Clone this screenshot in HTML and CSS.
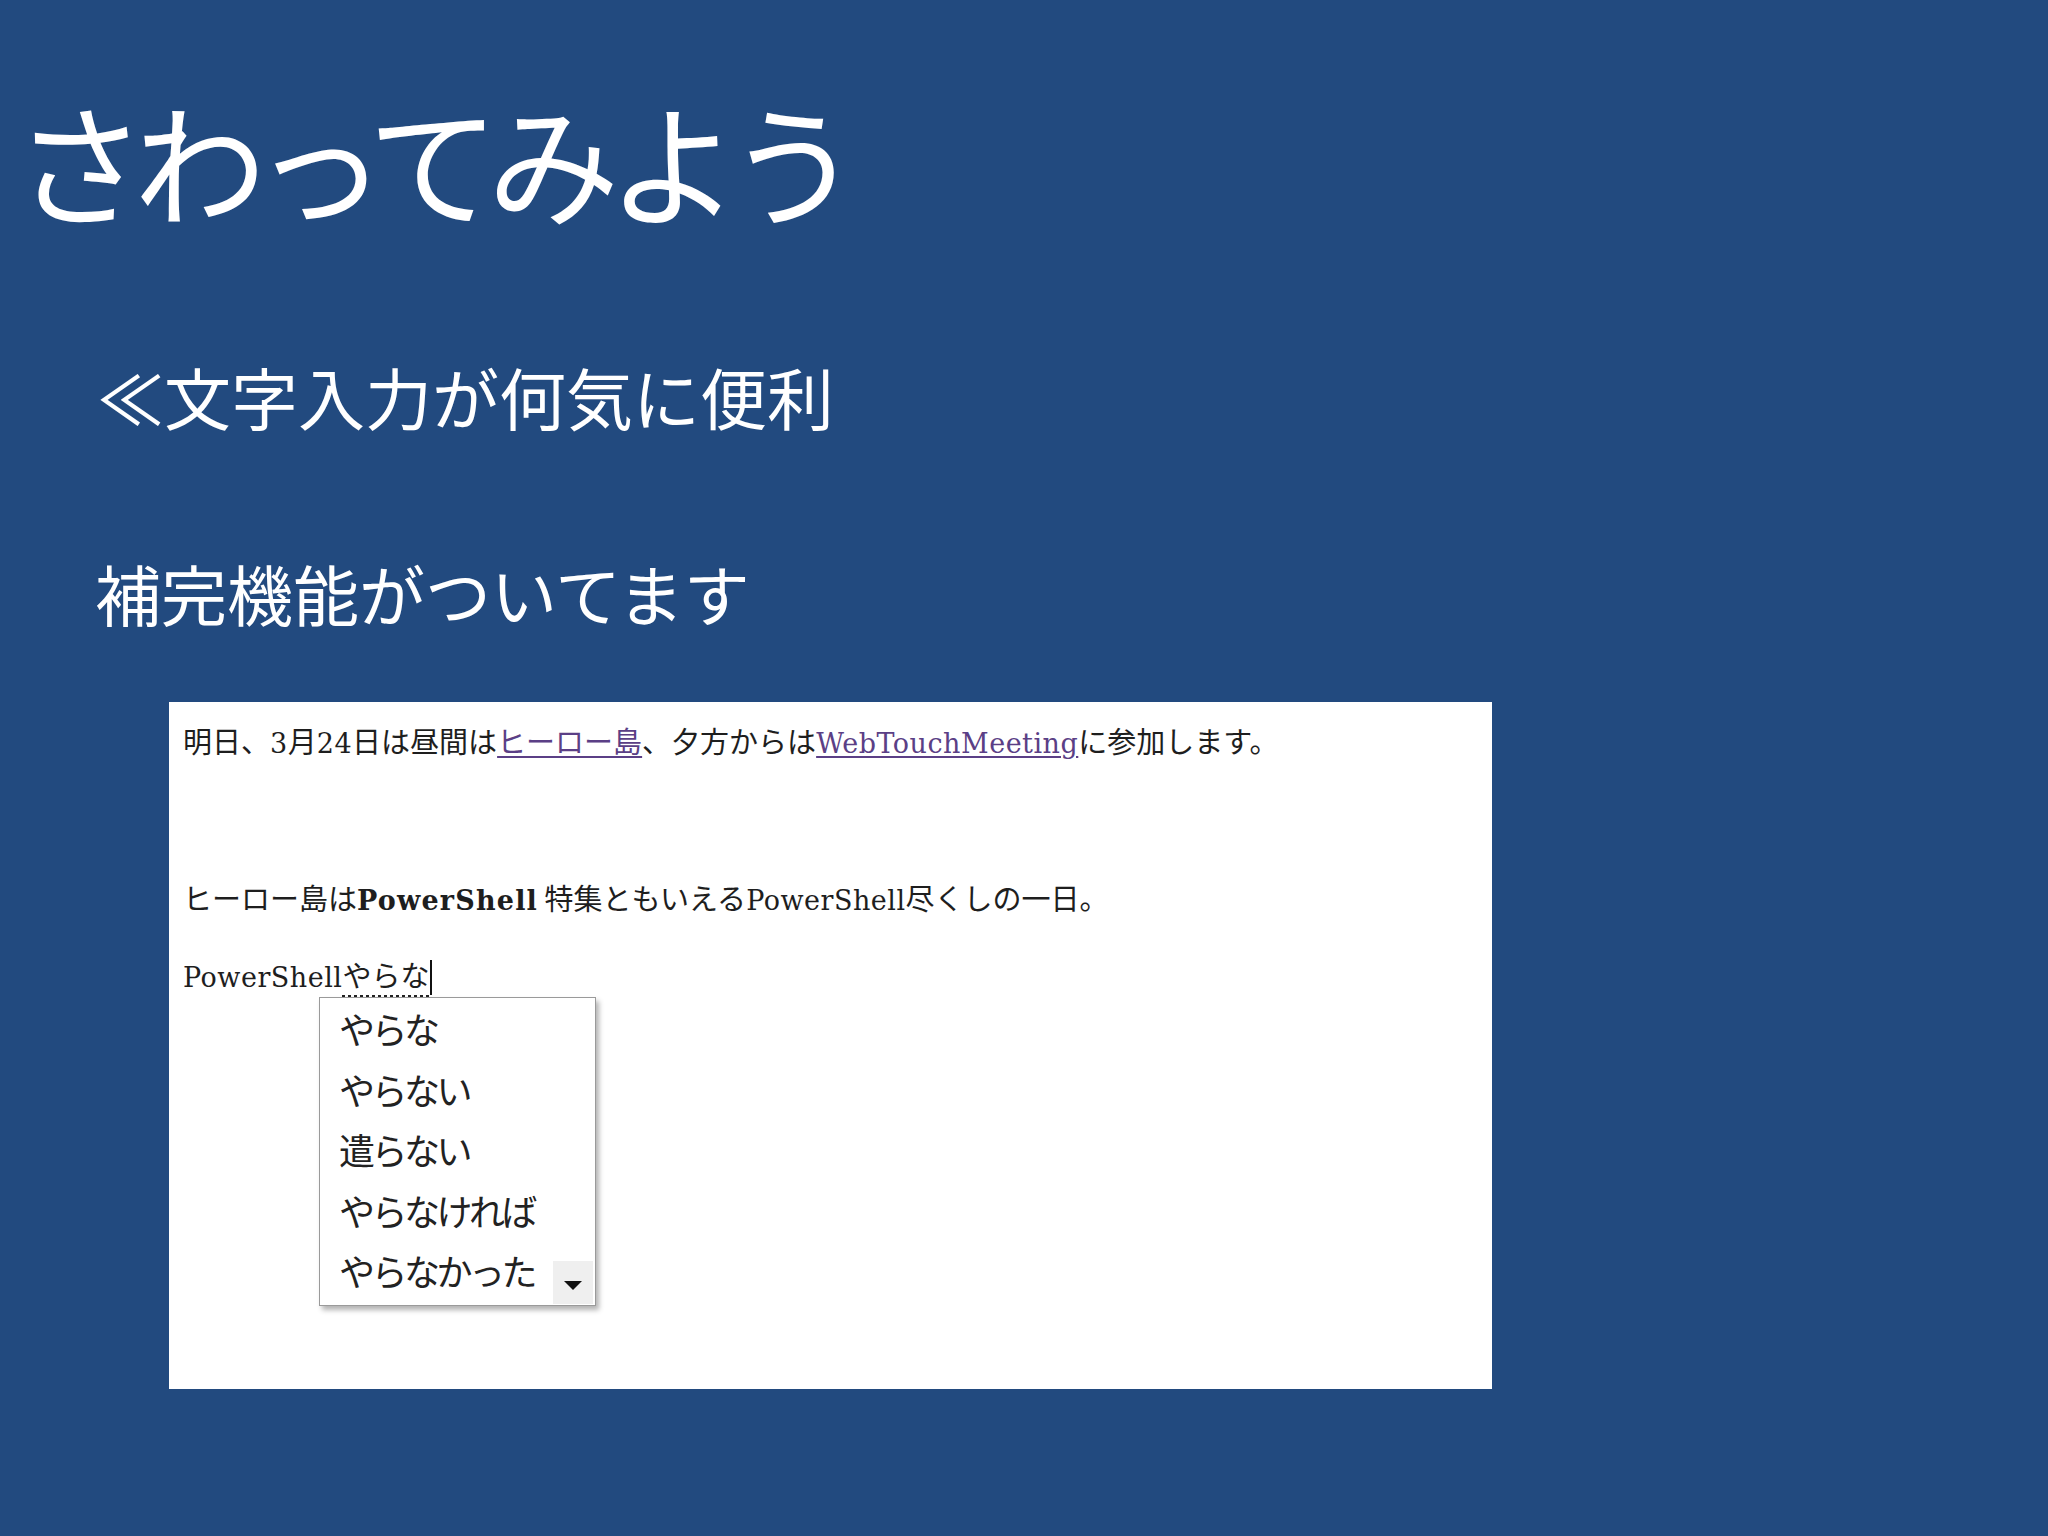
FILE: index.html
```html
<!DOCTYPE html>
<html lang="ja">
<head>
<meta charset="utf-8">
<title>さわってみよう</title>
<link rel="stylesheet" href="styles.css">
</head>
<body>
<main class="slide">
  <h1 class="title">さわってみよう</h1>
  <p class="point point-first">≪文字入力が何気に便利</p>
  <p class="point point-second">補完機能がついてます</p>
  <section class="shot">
    <p class="line line-1">明日、<span class="en">3</span>月<span class="en">24</span>日は昼間は<span class="link">ヒーロー島</span>、夕方からは<span class="link en">WebTouchMeeting</span>に参加します。</p>
    <p class="line line-2">ヒーロー島は<b class="en bold">PowerShell</b> 特集ともいえる<span class="en">PowerShell</span>尽くしの一日。</p>
    <p class="line line-3"><span class="en">PowerShell</span><span class="ime">やらな</span><span class="caret"></span></p>
    <div class="popup">
      <ul class="candidates">
        <li>やらな</li>
        <li>やらない</li>
        <li>遣らない</li>
        <li>やらなければ</li>
        <li>やらなかった</li>
      </ul>
      <div class="scroll-btn">
        <svg class="arrow" viewBox="0 0 18 9" width="18" height="9"><path d="M0 0 H18 L9 9 Z" fill="#111"/></svg>
      </div>
    </div>
  </section>
</main>
</body>
</html>
```

FILE: styles.css
```css
html, body {
  margin: 0;
  padding: 0;
  background: #224a7f;
}

.slide {
  width: 2048px;
  height: 1536px;
  background: #224a7f;
  color: #ffffff;
  font-family: "Noto Sans CJK JP", "Noto Sans", sans-serif;
  display: flex;
  flex-direction: column;
  align-items: flex-start;
  overflow: hidden;
}

.title {
  margin: 93px 0 0 14px;
  font-size: 132px;
  line-height: 1;
  font-weight: 400;
  letter-spacing: -12px;
}

.point {
  margin: 0;
  font-weight: 400;
  line-height: 1;
}

.point-first {
  margin-top: 137px;
  margin-left: 97px;
  font-size: 67px;
}

.point-second {
  margin-top: 130px;
  margin-left: 95px;
  font-size: 66px;
}

.shot {
  position: relative;
  margin: 77px 0 0 169px;
  width: 1323px;
  height: 687px;
  box-sizing: border-box;
  padding: 18px 14px 0;
  background: #ffffff;
  color: #1e1e1e;
  font-size: 29px;
  line-height: 40px;
}

.line {
  margin: 0;
  white-space: nowrap;
}

.line-2 {
  margin-top: 113px;
}

.line-3 {
  margin-top: 33px;
}

.en {
  font-family: "DejaVu Serif", "Liberation Serif", serif;
  font-size: 27px;
  letter-spacing: 0.5px;
}

.bold {
  font-weight: 700;
  letter-spacing: 1.2px;
}

.link {
  color: #5b3f86;
  text-decoration: underline;
  text-decoration-thickness: 2px;
  text-underline-offset: 3px;
}

.ime {
  border-bottom: 3px dotted #222;
}

.caret {
  display: inline-block;
  width: 2px;
  height: 35px;
  background: #111;
  vertical-align: -8px;
  margin-left: 1px;
}

.popup {
  position: absolute;
  left: 150px;
  top: 295px;
  width: 277px;
  height: 309px;
  box-sizing: border-box;
  border: 1px solid #9a9a9a;
  background: #ffffff;
  box-shadow: 3px 4px 5px rgba(0, 0, 0, 0.3);
}

.candidates {
  list-style: none;
  margin: 0;
  padding: 0 0 0 19px;
  font-size: 36px;
  line-height: 60.5px;
  color: #222;
  letter-spacing: -3.5px;
}

.scroll-btn {
  position: absolute;
  right: 2px;
  bottom: 1px;
  width: 40px;
  height: 43px;
  background: #efefef;
  display: flex;
  align-items: center;
  justify-content: center;
}

.arrow {
  display: block;
  margin-top: 6px;
}
```
